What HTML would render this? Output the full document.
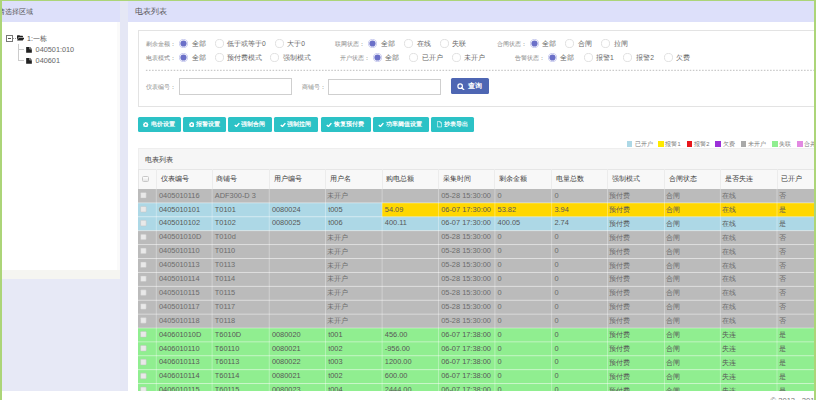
<!DOCTYPE html><html><head><meta charset="utf-8"><title>电表列表</title><style>
*{box-sizing:border-box;margin:0;padding:0}
html,body{width:816px;height:400px;overflow:hidden;background:#fff;font-family:"Liberation Sans",sans-serif;color:#666}
.a{position:absolute}
.t{position:absolute;white-space:nowrap}
#bg{left:2px;top:1px;width:812px;height:390px;background:#e7e9f6}
#lhead{left:2px;top:1px;width:118px;height:21px;background:#dde0fa;overflow:hidden}
#strip{left:120px;top:1px;width:7.5px;height:390px;background:#e5e7f5}
#lbody{left:2px;top:22px;width:118px;height:257px;background:#fafafa}
#rhead{left:127.5px;top:1px;width:686.5px;height:21px;background:#dde0fa}
#rbody{left:127.5px;top:22px;width:686.5px;height:369px;background:#fff;overflow:hidden}
.rad{position:absolute;width:9px;height:9px;border-radius:50%;border:1px solid #dcdcdc;background:#fff}
.rad.on{border-color:#c3c5ee}
.rad.on{background:radial-gradient(circle at 50% 50%,#6b70c8 0,#6b70c8 2.9px,#fff 3.3px)}
.lab{font-size:6px;line-height:8px;color:#888}
.opt{font-size:6.7px;line-height:8px;color:#666}
.btn{position:absolute;top:117.1px;height:14.7px;background:#2cc2c6;border-radius:1.5px;color:#fff;font-size:6px;line-height:14.7px;white-space:nowrap;font-weight:bold}
.lg{position:absolute;top:140.9px;width:5.6px;height:5.8px}
.lgt{font-size:5.7px;line-height:8px;color:#777}
</style></head><body>
<div class="a" id="bg"></div>
<div class="a" id="lhead"><span class="t" style="left:-4.3px;top:7px;font-size:6.7px;line-height:8px;color:#555">请选择区域</span></div>
<div class="a" id="strip"></div>
<div class="a" id="lbody"><div class="a" style="left:0;top:0;width:115px;height:248px;background:#fff"></div><div class="a" style="left:0;top:248px;width:118px;height:9px;background:#f5f5f1"></div></div>
<div class="a" style="left:6px;top:35px;width:6.8px;height:6.7px;border:1px solid #777;background:#fff"></div>
<div class="a" style="left:7.8px;top:38px;width:3.2px;height:0.8px;background:#555"></div>
<div class="a" style="left:13.2px;top:38px;width:0.8px;height:0.8px;background:#999"></div><div class="a" style="left:15px;top:38px;width:0.8px;height:0.8px;background:#999"></div>
<svg class="a" style="left:16.8px;top:35.4px" width="7.6" height="5.6" viewBox="0 0 14 10"><path d="M0 1.4 Q0 0.3 1 0.3 H4.6 L5.6 1.4 H10 Q11 1.4 11 2.4 V3.9 H3 L0 9 Z" fill="#222"/><path d="M3.3 4.7 H13.8 L10.6 9.8 H0.1 Z" fill="#222"/></svg>
<span class="t" style="left:27px;top:34.5px;font-size:7px;line-height:8px;color:#555">1:一栋</span>
<div class="a" style="left:18px;top:43.5px;width:0;height:17px;border-left:1px solid #ccc"></div>
<div class="a" style="left:18px;top:48.6px;width:5.6px;height:0;border-top:1px solid #ccc"></div>
<div class="a" style="left:18px;top:60px;width:5.6px;height:0;border-top:1px solid #ccc"></div>
<svg class="a" style="left:26.3px;top:46.9px" width="6" height="5.7" viewBox="0 0 10 10"><path d="M0 0 L6 0 L6 4 L10 4 L10 10 L0 10 Z M7 0 L10 3 L7 3 Z" fill="#222"/></svg>
<svg class="a" style="left:26.3px;top:58.1px" width="6" height="5.7" viewBox="0 0 10 10"><path d="M0 0 L6 0 L6 4 L10 4 L10 10 L0 10 Z M7 0 L10 3 L7 3 Z" fill="#222"/></svg>
<span class="t" style="left:35.6px;top:46px;font-size:7.3px;line-height:8px;color:#666">040501:010</span>
<span class="t" style="left:35.6px;top:57px;font-size:7.3px;line-height:8px;color:#666">040601</span>
<div class="a" id="rhead"><span class="t" style="left:7.5px;top:6px;font-size:7.8px;line-height:9px;color:#555">电表列表</span></div>
<div class="a" id="rbody"></div>
<div class="a" style="left:137.5px;top:30px;width:700px;height:76.6px;border:1px solid #e3e3e3;background:#fff"></div>
<span class="t lab" style="left:145.5px;top:39.5px">剩余金额：</span>
<svg class="a" style="left:178.75px;top:39.00px" width="9" height="9" viewBox="0 0 9 9"><circle cx="4.5" cy="4.5" r="4.05" fill="#fff" stroke="#c4c6ee" stroke-width="0.9"/><circle cx="4.5" cy="4.5" r="3.1" fill="#6b70c8"/></svg>
<span class="t opt" style="left:191.6px;top:39.5px">全部</span>
<svg class="a" style="left:214.50px;top:39.00px" width="9" height="9" viewBox="0 0 9 9"><circle cx="4.5" cy="4.5" r="4.05" fill="#fff" stroke="#dedede" stroke-width="0.9"/></svg>
<span class="t opt" style="left:227.1px;top:39.5px">低于或等于0</span>
<svg class="a" style="left:275.00px;top:39.00px" width="9" height="9" viewBox="0 0 9 9"><circle cx="4.5" cy="4.5" r="4.05" fill="#fff" stroke="#dedede" stroke-width="0.9"/></svg>
<span class="t opt" style="left:287.2px;top:39.5px">大于0</span>
<span class="t lab" style="left:334.7px;top:39.5px">联网状态：</span>
<svg class="a" style="left:368.00px;top:39.00px" width="9" height="9" viewBox="0 0 9 9"><circle cx="4.5" cy="4.5" r="4.05" fill="#fff" stroke="#c4c6ee" stroke-width="0.9"/><circle cx="4.5" cy="4.5" r="3.1" fill="#6b70c8"/></svg>
<span class="t opt" style="left:380.7px;top:39.5px">全部</span>
<svg class="a" style="left:404.00px;top:39.00px" width="9" height="9" viewBox="0 0 9 9"><circle cx="4.5" cy="4.5" r="4.05" fill="#fff" stroke="#dedede" stroke-width="0.9"/></svg>
<span class="t opt" style="left:416.7px;top:39.5px">在线</span>
<svg class="a" style="left:439.80px;top:39.00px" width="9" height="9" viewBox="0 0 9 9"><circle cx="4.5" cy="4.5" r="4.05" fill="#fff" stroke="#dedede" stroke-width="0.9"/></svg>
<span class="t opt" style="left:451.7px;top:39.5px">失联</span>
<span class="t lab" style="left:496.6px;top:39.5px">合闸状态：</span>
<svg class="a" style="left:529.50px;top:39.00px" width="9" height="9" viewBox="0 0 9 9"><circle cx="4.5" cy="4.5" r="4.05" fill="#fff" stroke="#c4c6ee" stroke-width="0.9"/><circle cx="4.5" cy="4.5" r="3.1" fill="#6b70c8"/></svg>
<span class="t opt" style="left:541.7px;top:39.5px">全部</span>
<svg class="a" style="left:565.00px;top:39.00px" width="9" height="9" viewBox="0 0 9 9"><circle cx="4.5" cy="4.5" r="4.05" fill="#fff" stroke="#dedede" stroke-width="0.9"/></svg>
<span class="t opt" style="left:577.7px;top:39.5px">合闸</span>
<svg class="a" style="left:601.00px;top:39.00px" width="9" height="9" viewBox="0 0 9 9"><circle cx="4.5" cy="4.5" r="4.05" fill="#fff" stroke="#dedede" stroke-width="0.9"/></svg>
<span class="t opt" style="left:613.5px;top:39.5px">拉闸</span>
<span class="t lab" style="left:145.5px;top:53.8px">电表模式：</span>
<svg class="a" style="left:178.75px;top:53.30px" width="9" height="9" viewBox="0 0 9 9"><circle cx="4.5" cy="4.5" r="4.05" fill="#fff" stroke="#c4c6ee" stroke-width="0.9"/><circle cx="4.5" cy="4.5" r="3.1" fill="#6b70c8"/></svg>
<span class="t opt" style="left:191.6px;top:53.8px">全部</span>
<svg class="a" style="left:214.60px;top:53.30px" width="9" height="9" viewBox="0 0 9 9"><circle cx="4.5" cy="4.5" r="4.05" fill="#fff" stroke="#dedede" stroke-width="0.9"/></svg>
<span class="t opt" style="left:227.1px;top:53.8px">预付费模式</span>
<svg class="a" style="left:270.30px;top:53.30px" width="9" height="9" viewBox="0 0 9 9"><circle cx="4.5" cy="4.5" r="4.05" fill="#fff" stroke="#dedede" stroke-width="0.9"/></svg>
<span class="t opt" style="left:283.4px;top:53.8px">强制模式</span>
<span class="t lab" style="left:340.0px;top:53.8px">开户状态：</span>
<svg class="a" style="left:373.20px;top:53.30px" width="9" height="9" viewBox="0 0 9 9"><circle cx="4.5" cy="4.5" r="4.05" fill="#fff" stroke="#c4c6ee" stroke-width="0.9"/><circle cx="4.5" cy="4.5" r="3.1" fill="#6b70c8"/></svg>
<span class="t opt" style="left:385.4px;top:53.8px">全部</span>
<svg class="a" style="left:409.20px;top:53.30px" width="9" height="9" viewBox="0 0 9 9"><circle cx="4.5" cy="4.5" r="4.05" fill="#fff" stroke="#dedede" stroke-width="0.9"/></svg>
<span class="t opt" style="left:421.5px;top:53.8px">已开户</span>
<svg class="a" style="left:452.00px;top:53.30px" width="9" height="9" viewBox="0 0 9 9"><circle cx="4.5" cy="4.5" r="4.05" fill="#fff" stroke="#dedede" stroke-width="0.9"/></svg>
<span class="t opt" style="left:464.0px;top:53.8px">未开户</span>
<span class="t lab" style="left:514.9px;top:53.8px">告警状态：</span>
<svg class="a" style="left:547.50px;top:53.30px" width="9" height="9" viewBox="0 0 9 9"><circle cx="4.5" cy="4.5" r="4.05" fill="#fff" stroke="#c4c6ee" stroke-width="0.9"/><circle cx="4.5" cy="4.5" r="3.1" fill="#6b70c8"/></svg>
<span class="t opt" style="left:560.0px;top:53.8px">全部</span>
<svg class="a" style="left:583.80px;top:53.30px" width="9" height="9" viewBox="0 0 9 9"><circle cx="4.5" cy="4.5" r="4.05" fill="#fff" stroke="#dedede" stroke-width="0.9"/></svg>
<span class="t opt" style="left:596.0px;top:53.8px">报警1</span>
<svg class="a" style="left:623.20px;top:53.30px" width="9" height="9" viewBox="0 0 9 9"><circle cx="4.5" cy="4.5" r="4.05" fill="#fff" stroke="#dedede" stroke-width="0.9"/></svg>
<span class="t opt" style="left:636.3px;top:53.8px">报警2</span>
<svg class="a" style="left:663.70px;top:53.30px" width="9" height="9" viewBox="0 0 9 9"><circle cx="4.5" cy="4.5" r="4.05" fill="#fff" stroke="#dedede" stroke-width="0.9"/></svg>
<span class="t opt" style="left:676.1px;top:53.8px">欠费</span>
<svg class="a" style="left:145px;top:69px" width="669" height="3" viewBox="0 0 669 3"><line x1="0.9" y1="1.3" x2="669" y2="1.3" stroke="#bdbdbd" stroke-width="1" stroke-dasharray="1.55 1.54"/></svg>
<span class="t lab" style="left:145.8px;top:82.8px">仪表编号：</span>
<div class="a" style="left:178.5px;top:78.3px;width:113.5px;height:17px;border:1px solid #cfcfcf;background:#fff"></div>
<span class="t lab" style="left:301.5px;top:82.8px">商铺号：</span>
<div class="a" style="left:328px;top:78.5px;width:113px;height:16.8px;border:1px solid #cfcfcf;background:#fff"></div>
<div class="a" style="left:450.9px;top:78px;width:38px;height:15.7px;background:#4e66b3;border-radius:1.5px"></div>
<svg class="a" style="left:457px;top:82.9px" width="7.5" height="7.5" viewBox="0 0 10 10"><circle cx="4.2" cy="4.2" r="3" stroke="#fff" stroke-width="1.6" fill="none"/><path d="M6.3 6.3 L9 9" stroke="#fff" stroke-width="1.8" stroke-linecap="round"/></svg>
<span class="t" style="left:468px;top:82.4px;font-size:7px;line-height:8px;color:#fff;font-weight:bold">查询</span>
<div class="btn" style="left:137.8px;width:43.0px"><svg class="a" style="left:5.7px;top:4.8px" width="5.4" height="5.4" viewBox="0 0 10 10"><circle cx="5" cy="5" r="3.3" stroke="#fff" stroke-width="2.4" fill="none"/><path d="M5 0V10M0 5H10M1.5 1.5L8.5 8.5M8.5 1.5L1.5 8.5" stroke="#fff" stroke-width="1.6"/><circle cx="5" cy="5" r="1.6" fill="#2cc2c6"/></svg><span class="t" style="left:13.0px;top:0">电价设置</span></div>
<div class="btn" style="left:183.0px;width:42.7px"><svg class="a" style="left:5.7px;top:4.8px" width="5.4" height="5.4" viewBox="0 0 10 10"><circle cx="5" cy="5" r="3.3" stroke="#fff" stroke-width="2.4" fill="none"/><path d="M5 0V10M0 5H10M1.5 1.5L8.5 8.5M8.5 1.5L1.5 8.5" stroke="#fff" stroke-width="1.6"/><circle cx="5" cy="5" r="1.6" fill="#2cc2c6"/></svg><span class="t" style="left:13.0px;top:0">报警设置</span></div>
<div class="btn" style="left:228.2px;width:43.8px"><svg class="a" style="left:5.5px;top:4.6px" width="6" height="5.6" viewBox="0 0 10 10"><path d="M1 5.2 L4 8 L9.2 2" stroke="#fff" stroke-width="2.6" fill="none"/></svg><span class="t" style="left:13.0px;top:0">强制合闸</span></div>
<div class="btn" style="left:274.4px;width:43.4px"><svg class="a" style="left:5.5px;top:4.6px" width="6" height="5.6" viewBox="0 0 10 10"><path d="M1 5.2 L4 8 L9.2 2" stroke="#fff" stroke-width="2.6" fill="none"/></svg><span class="t" style="left:13.0px;top:0">强制拉闸</span></div>
<div class="btn" style="left:320.6px;width:50.0px"><svg class="a" style="left:5.5px;top:4.6px" width="6" height="5.6" viewBox="0 0 10 10"><path d="M1 5.2 L4 8 L9.2 2" stroke="#fff" stroke-width="2.6" fill="none"/></svg><span class="t" style="left:13.0px;top:0">恢复预付费</span></div>
<div class="btn" style="left:372.9px;width:56.1px"><svg class="a" style="left:5.5px;top:4.6px" width="6" height="5.6" viewBox="0 0 10 10"><path d="M1 5.2 L4 8 L9.2 2" stroke="#fff" stroke-width="2.6" fill="none"/></svg><span class="t" style="left:13.0px;top:0">功率阈值设置</span></div>
<div class="btn" style="left:431.2px;width:42.8px"><svg class="a" style="left:5.8px;top:4.3px" width="5" height="6.4" viewBox="0 0 8 10"><path d="M0.6 0.6 H5 L7.4 3 V9.4 H0.6 Z M5 0.6 V3 H7.4" stroke="#fff" stroke-width="1" fill="none"/></svg><span class="t" style="left:12.5px;top:0">抄表导出</span></div>
<div class="lg" style="left:626.7px;background:#add8e6"></div>
<span class="t lgt" style="left:634.5px;top:139.9px">已开户</span>
<div class="lg" style="left:658.0px;background:#ffea00"></div>
<span class="t lgt" style="left:665.4px;top:139.9px">报警1</span>
<div class="lg" style="left:686.8px;background:#e8161c"></div>
<span class="t lgt" style="left:694.3px;top:139.9px">报警2</span>
<div class="lg" style="left:715.2px;background:#9b30d8"></div>
<span class="t lgt" style="left:722.8px;top:139.9px">欠费</span>
<div class="lg" style="left:740.5px;background:#a9a9a9"></div>
<span class="t lgt" style="left:748.1px;top:139.9px">未开户</span>
<div class="lg" style="left:772.0px;background:#90ee90"></div>
<span class="t lgt" style="left:779.3px;top:139.9px">失联</span>
<div class="lg" style="left:797.0px;background:#e28ae2"></div>
<span class="t lgt" style="left:804.3px;top:139.9px">合并</span>
<div class="a" style="left:138px;top:148.4px;width:700px;height:20.6px;background:#f6f6f6;border:1px solid #eeeeee;border-bottom:none"></div>
<span class="t" style="left:144.8px;top:156px;font-size:6.6px;line-height:8px;color:#444">电表列表</span>
<div class="a" style="left:138px;top:169px;width:700px;height:19.75px;background:#f8f8f8;border:1px solid #e6e6e6;border-bottom:none"></div>
<div class="a" style="left:155.75px;top:169px;width:1px;height:19.75px;background:#ececec"></div>
<div class="a" style="left:211.60px;top:169px;width:1px;height:19.75px;background:#ececec"></div>
<div class="a" style="left:268.70px;top:169px;width:1px;height:19.75px;background:#ececec"></div>
<div class="a" style="left:325.00px;top:169px;width:1px;height:19.75px;background:#ececec"></div>
<div class="a" style="left:381.60px;top:169px;width:1px;height:19.75px;background:#ececec"></div>
<div class="a" style="left:438.00px;top:169px;width:1px;height:19.75px;background:#ececec"></div>
<div class="a" style="left:494.40px;top:169px;width:1px;height:19.75px;background:#ececec"></div>
<div class="a" style="left:551.20px;top:169px;width:1px;height:19.75px;background:#ececec"></div>
<div class="a" style="left:607.10px;top:169px;width:1px;height:19.75px;background:#ececec"></div>
<div class="a" style="left:663.90px;top:169px;width:1px;height:19.75px;background:#ececec"></div>
<div class="a" style="left:719.80px;top:169px;width:1px;height:19.75px;background:#ececec"></div>
<div class="a" style="left:776.50px;top:169px;width:1px;height:19.75px;background:#ececec"></div>
<div class="a" style="left:142px;top:175.9px;width:6.5px;height:6.3px;border:1px solid #c8c8c8;border-radius:1.5px;background:linear-gradient(#fff,#e6e6e6)"></div>
<span class="t" style="left:160.55px;top:175.3px;font-size:6.5px;line-height:8px;color:#3a3a3a">仪表编号</span>
<span class="t" style="left:216.40px;top:175.3px;font-size:6.5px;line-height:8px;color:#3a3a3a">商铺号</span>
<span class="t" style="left:273.50px;top:175.3px;font-size:6.5px;line-height:8px;color:#3a3a3a">用户编号</span>
<span class="t" style="left:329.80px;top:175.3px;font-size:6.5px;line-height:8px;color:#3a3a3a">用户名</span>
<span class="t" style="left:386.40px;top:175.3px;font-size:6.5px;line-height:8px;color:#3a3a3a">购电总额</span>
<span class="t" style="left:442.80px;top:175.3px;font-size:6.5px;line-height:8px;color:#3a3a3a">采集时间</span>
<span class="t" style="left:499.20px;top:175.3px;font-size:6.5px;line-height:8px;color:#3a3a3a">剩余金额</span>
<span class="t" style="left:556.00px;top:175.3px;font-size:6.5px;line-height:8px;color:#3a3a3a">电量总数</span>
<span class="t" style="left:611.90px;top:175.3px;font-size:6.5px;line-height:8px;color:#3a3a3a">强制模式</span>
<span class="t" style="left:668.70px;top:175.3px;font-size:6.5px;line-height:8px;color:#3a3a3a">合闸状态</span>
<span class="t" style="left:724.60px;top:175.3px;font-size:6.5px;line-height:8px;color:#3a3a3a">是否失连</span>
<span class="t" style="left:781.30px;top:175.3px;font-size:6.5px;line-height:8px;color:#3a3a3a">已开户</span>
<div class="a" style="left:138px;top:188.75px;width:676px;height:202.25px;overflow:hidden">
<svg class="a" style="left:0;top:0" width="676" height="210" viewBox="0 0 676 210"><rect x="0" y="0.00" width="676" height="13.90" fill="#bbbbbb"/><rect x="0" y="13.90" width="676" height="13.90" fill="#add8e6"/><rect x="244.10" y="13.90" width="500" height="13.90" fill="#ffd700"/><rect x="0" y="27.80" width="676" height="13.90" fill="#add8e6"/><rect x="0" y="41.70" width="676" height="13.90" fill="#bbbbbb"/><rect x="0" y="55.60" width="676" height="13.90" fill="#bbbbbb"/><rect x="0" y="69.50" width="676" height="13.90" fill="#bbbbbb"/><rect x="0" y="83.40" width="676" height="13.90" fill="#bbbbbb"/><rect x="0" y="97.30" width="676" height="13.90" fill="#bbbbbb"/><rect x="0" y="111.20" width="676" height="13.90" fill="#bbbbbb"/><rect x="0" y="125.10" width="676" height="13.90" fill="#bbbbbb"/><rect x="0" y="139.00" width="676" height="13.90" fill="#90ee90"/><rect x="0" y="152.90" width="676" height="13.90" fill="#90ee90"/><rect x="0" y="166.80" width="676" height="13.90" fill="#90ee90"/><rect x="0" y="180.70" width="676" height="13.90" fill="#90ee90"/><rect x="0" y="194.60" width="676" height="13.90" fill="#90ee90"/><rect x="0" y="13.45" width="676" height="0.9" fill="#fff" fill-opacity="0.42"/><rect x="0" y="27.35" width="676" height="0.9" fill="#fff" fill-opacity="0.42"/><rect x="0" y="41.25" width="676" height="0.9" fill="#fff" fill-opacity="0.42"/><rect x="0" y="55.15" width="676" height="0.9" fill="#fff" fill-opacity="0.42"/><rect x="0" y="69.05" width="676" height="0.9" fill="#fff" fill-opacity="0.42"/><rect x="0" y="82.95" width="676" height="0.9" fill="#fff" fill-opacity="0.42"/><rect x="0" y="96.85" width="676" height="0.9" fill="#fff" fill-opacity="0.42"/><rect x="0" y="110.75" width="676" height="0.9" fill="#fff" fill-opacity="0.42"/><rect x="0" y="124.65" width="676" height="0.9" fill="#fff" fill-opacity="0.42"/><rect x="0" y="138.55" width="676" height="0.9" fill="#fff" fill-opacity="0.42"/><rect x="0" y="152.45" width="676" height="0.9" fill="#fff" fill-opacity="0.42"/><rect x="0" y="166.35" width="676" height="0.9" fill="#fff" fill-opacity="0.42"/><rect x="0" y="180.25" width="676" height="0.9" fill="#fff" fill-opacity="0.42"/><rect x="0" y="194.15" width="676" height="0.9" fill="#fff" fill-opacity="0.42"/><rect x="0" y="208.05" width="676" height="0.9" fill="#fff" fill-opacity="0.42"/><rect x="17.85" y="0" width="0.8" height="210" fill="#fff" fill-opacity="0.4"/><rect x="73.70" y="0" width="0.8" height="210" fill="#fff" fill-opacity="0.4"/><rect x="130.80" y="0" width="0.8" height="210" fill="#fff" fill-opacity="0.4"/><rect x="187.10" y="0" width="0.8" height="210" fill="#fff" fill-opacity="0.4"/><rect x="243.70" y="0" width="0.8" height="210" fill="#fff" fill-opacity="0.4"/><rect x="300.10" y="0" width="0.8" height="210" fill="#fff" fill-opacity="0.4"/><rect x="356.50" y="0" width="0.8" height="210" fill="#fff" fill-opacity="0.4"/><rect x="413.30" y="0" width="0.8" height="210" fill="#fff" fill-opacity="0.4"/><rect x="469.20" y="0" width="0.8" height="210" fill="#fff" fill-opacity="0.4"/><rect x="526.00" y="0" width="0.8" height="210" fill="#fff" fill-opacity="0.4"/><rect x="581.90" y="0" width="0.8" height="210" fill="#fff" fill-opacity="0.4"/><rect x="638.60" y="0" width="0.8" height="210" fill="#fff" fill-opacity="0.4"/><rect x="2.6" y="3.50" width="5.6" height="5.6" rx="0.7" fill="#e9e9e9" stroke="#c2c2c2" stroke-width="0.5"/><rect x="2.6" y="17.40" width="5.6" height="5.6" rx="0.7" fill="#e9e9e9" stroke="#c2c2c2" stroke-width="0.5"/><rect x="2.6" y="31.30" width="5.6" height="5.6" rx="0.7" fill="#e9e9e9" stroke="#c2c2c2" stroke-width="0.5"/><rect x="2.6" y="45.20" width="5.6" height="5.6" rx="0.7" fill="#e9e9e9" stroke="#c2c2c2" stroke-width="0.5"/><rect x="2.6" y="59.10" width="5.6" height="5.6" rx="0.7" fill="#e9e9e9" stroke="#c2c2c2" stroke-width="0.5"/><rect x="2.6" y="73.00" width="5.6" height="5.6" rx="0.7" fill="#e9e9e9" stroke="#c2c2c2" stroke-width="0.5"/><rect x="2.6" y="86.90" width="5.6" height="5.6" rx="0.7" fill="#e9e9e9" stroke="#c2c2c2" stroke-width="0.5"/><rect x="2.6" y="100.80" width="5.6" height="5.6" rx="0.7" fill="#e9e9e9" stroke="#c2c2c2" stroke-width="0.5"/><rect x="2.6" y="114.70" width="5.6" height="5.6" rx="0.7" fill="#e9e9e9" stroke="#c2c2c2" stroke-width="0.5"/><rect x="2.6" y="128.60" width="5.6" height="5.6" rx="0.7" fill="#e9e9e9" stroke="#c2c2c2" stroke-width="0.5"/><rect x="2.6" y="142.50" width="5.6" height="5.6" rx="0.7" fill="#e9e9e9" stroke="#c2c2c2" stroke-width="0.5"/><rect x="2.6" y="156.40" width="5.6" height="5.6" rx="0.7" fill="#e9e9e9" stroke="#c2c2c2" stroke-width="0.5"/><rect x="2.6" y="170.30" width="5.6" height="5.6" rx="0.7" fill="#e9e9e9" stroke="#c2c2c2" stroke-width="0.5"/><rect x="2.6" y="184.20" width="5.6" height="5.6" rx="0.7" fill="#e9e9e9" stroke="#c2c2c2" stroke-width="0.5"/><rect x="2.6" y="198.10" width="5.6" height="5.6" rx="0.7" fill="#e9e9e9" stroke="#c2c2c2" stroke-width="0.5"/></svg>
<span class="t" style="left:20.95px;top:2.90px;font-size:7.4px;line-height:8px;color:#6c6c6c">0405010116</span>
<span class="t" style="left:76.80px;top:2.90px;font-size:7.4px;line-height:8px;color:#6c6c6c">ADF300-D 3</span>
<span class="t" style="left:189.10px;top:3.30px;font-size:6.6px;line-height:8px;color:#6c6c6c">未开户</span>
<span class="t" style="left:303.20px;top:2.90px;font-size:7.4px;line-height:8px;color:#6c6c6c">05-28 15:30:00</span>
<span class="t" style="left:359.60px;top:2.90px;font-size:7.4px;line-height:8px;color:#6c6c6c">0</span>
<span class="t" style="left:416.40px;top:2.90px;font-size:7.4px;line-height:8px;color:#6c6c6c">0</span>
<span class="t" style="left:471.20px;top:3.30px;font-size:6.6px;line-height:8px;color:#6c6c6c">预付费</span>
<span class="t" style="left:528.00px;top:3.30px;font-size:6.6px;line-height:8px;color:#6c6c6c">合闸</span>
<span class="t" style="left:583.90px;top:3.30px;font-size:6.6px;line-height:8px;color:#6c6c6c">在线</span>
<span class="t" style="left:640.60px;top:3.30px;font-size:6.6px;line-height:8px;color:#6c6c6c">否</span>
<span class="t" style="left:20.95px;top:16.80px;font-size:7.4px;line-height:8px;color:#585858">0405010101</span>
<span class="t" style="left:76.80px;top:16.80px;font-size:7.4px;line-height:8px;color:#585858">T0101</span>
<span class="t" style="left:133.90px;top:16.80px;font-size:7.4px;line-height:8px;color:#585858">0080024</span>
<span class="t" style="left:190.20px;top:16.80px;font-size:7.4px;line-height:8px;color:#585858">t005</span>
<span class="t" style="left:246.80px;top:16.80px;font-size:7.4px;line-height:8px;color:#585858">54.09</span>
<span class="t" style="left:303.20px;top:16.80px;font-size:7.4px;line-height:8px;color:#585858">06-07 17:30:00</span>
<span class="t" style="left:359.60px;top:16.80px;font-size:7.4px;line-height:8px;color:#585858">53.82</span>
<span class="t" style="left:416.40px;top:16.80px;font-size:7.4px;line-height:8px;color:#585858">3.94</span>
<span class="t" style="left:471.20px;top:17.20px;font-size:6.6px;line-height:8px;color:#585858">预付费</span>
<span class="t" style="left:528.00px;top:17.20px;font-size:6.6px;line-height:8px;color:#585858">合闸</span>
<span class="t" style="left:583.90px;top:17.20px;font-size:6.6px;line-height:8px;color:#585858">在线</span>
<span class="t" style="left:640.60px;top:17.20px;font-size:6.6px;line-height:8px;color:#585858">是</span>
<span class="t" style="left:20.95px;top:30.70px;font-size:7.4px;line-height:8px;color:#585858">0405010102</span>
<span class="t" style="left:76.80px;top:30.70px;font-size:7.4px;line-height:8px;color:#585858">T0102</span>
<span class="t" style="left:133.90px;top:30.70px;font-size:7.4px;line-height:8px;color:#585858">0080025</span>
<span class="t" style="left:190.20px;top:30.70px;font-size:7.4px;line-height:8px;color:#585858">t006</span>
<span class="t" style="left:246.80px;top:30.70px;font-size:7.4px;line-height:8px;color:#585858">400.11</span>
<span class="t" style="left:303.20px;top:30.70px;font-size:7.4px;line-height:8px;color:#585858">06-07 17:30:00</span>
<span class="t" style="left:359.60px;top:30.70px;font-size:7.4px;line-height:8px;color:#585858">400.05</span>
<span class="t" style="left:416.40px;top:30.70px;font-size:7.4px;line-height:8px;color:#585858">2.74</span>
<span class="t" style="left:471.20px;top:31.10px;font-size:6.6px;line-height:8px;color:#585858">预付费</span>
<span class="t" style="left:528.00px;top:31.10px;font-size:6.6px;line-height:8px;color:#585858">合闸</span>
<span class="t" style="left:583.90px;top:31.10px;font-size:6.6px;line-height:8px;color:#585858">在线</span>
<span class="t" style="left:640.60px;top:31.10px;font-size:6.6px;line-height:8px;color:#585858">是</span>
<span class="t" style="left:20.95px;top:44.60px;font-size:7.4px;line-height:8px;color:#6c6c6c">040501010D</span>
<span class="t" style="left:76.80px;top:44.60px;font-size:7.4px;line-height:8px;color:#6c6c6c">T010d</span>
<span class="t" style="left:189.10px;top:45.00px;font-size:6.6px;line-height:8px;color:#6c6c6c">未开户</span>
<span class="t" style="left:303.20px;top:44.60px;font-size:7.4px;line-height:8px;color:#6c6c6c">05-28 15:30:00</span>
<span class="t" style="left:359.60px;top:44.60px;font-size:7.4px;line-height:8px;color:#6c6c6c">0</span>
<span class="t" style="left:416.40px;top:44.60px;font-size:7.4px;line-height:8px;color:#6c6c6c">0</span>
<span class="t" style="left:471.20px;top:45.00px;font-size:6.6px;line-height:8px;color:#6c6c6c">预付费</span>
<span class="t" style="left:528.00px;top:45.00px;font-size:6.6px;line-height:8px;color:#6c6c6c">合闸</span>
<span class="t" style="left:583.90px;top:45.00px;font-size:6.6px;line-height:8px;color:#6c6c6c">在线</span>
<span class="t" style="left:640.60px;top:45.00px;font-size:6.6px;line-height:8px;color:#6c6c6c">否</span>
<span class="t" style="left:20.95px;top:58.50px;font-size:7.4px;line-height:8px;color:#6c6c6c">0405010110</span>
<span class="t" style="left:76.80px;top:58.50px;font-size:7.4px;line-height:8px;color:#6c6c6c">T0110</span>
<span class="t" style="left:189.10px;top:58.90px;font-size:6.6px;line-height:8px;color:#6c6c6c">未开户</span>
<span class="t" style="left:303.20px;top:58.50px;font-size:7.4px;line-height:8px;color:#6c6c6c">05-28 15:30:00</span>
<span class="t" style="left:359.60px;top:58.50px;font-size:7.4px;line-height:8px;color:#6c6c6c">0</span>
<span class="t" style="left:416.40px;top:58.50px;font-size:7.4px;line-height:8px;color:#6c6c6c">0</span>
<span class="t" style="left:471.20px;top:58.90px;font-size:6.6px;line-height:8px;color:#6c6c6c">预付费</span>
<span class="t" style="left:528.00px;top:58.90px;font-size:6.6px;line-height:8px;color:#6c6c6c">合闸</span>
<span class="t" style="left:583.90px;top:58.90px;font-size:6.6px;line-height:8px;color:#6c6c6c">在线</span>
<span class="t" style="left:640.60px;top:58.90px;font-size:6.6px;line-height:8px;color:#6c6c6c">否</span>
<span class="t" style="left:20.95px;top:72.40px;font-size:7.4px;line-height:8px;color:#6c6c6c">0405010113</span>
<span class="t" style="left:76.80px;top:72.40px;font-size:7.4px;line-height:8px;color:#6c6c6c">T0113</span>
<span class="t" style="left:189.10px;top:72.80px;font-size:6.6px;line-height:8px;color:#6c6c6c">未开户</span>
<span class="t" style="left:303.20px;top:72.40px;font-size:7.4px;line-height:8px;color:#6c6c6c">05-28 15:30:00</span>
<span class="t" style="left:359.60px;top:72.40px;font-size:7.4px;line-height:8px;color:#6c6c6c">0</span>
<span class="t" style="left:416.40px;top:72.40px;font-size:7.4px;line-height:8px;color:#6c6c6c">0</span>
<span class="t" style="left:471.20px;top:72.80px;font-size:6.6px;line-height:8px;color:#6c6c6c">预付费</span>
<span class="t" style="left:528.00px;top:72.80px;font-size:6.6px;line-height:8px;color:#6c6c6c">合闸</span>
<span class="t" style="left:583.90px;top:72.80px;font-size:6.6px;line-height:8px;color:#6c6c6c">在线</span>
<span class="t" style="left:640.60px;top:72.80px;font-size:6.6px;line-height:8px;color:#6c6c6c">否</span>
<span class="t" style="left:20.95px;top:86.30px;font-size:7.4px;line-height:8px;color:#6c6c6c">0405010114</span>
<span class="t" style="left:76.80px;top:86.30px;font-size:7.4px;line-height:8px;color:#6c6c6c">T0114</span>
<span class="t" style="left:189.10px;top:86.70px;font-size:6.6px;line-height:8px;color:#6c6c6c">未开户</span>
<span class="t" style="left:303.20px;top:86.30px;font-size:7.4px;line-height:8px;color:#6c6c6c">05-28 15:30:00</span>
<span class="t" style="left:359.60px;top:86.30px;font-size:7.4px;line-height:8px;color:#6c6c6c">0</span>
<span class="t" style="left:416.40px;top:86.30px;font-size:7.4px;line-height:8px;color:#6c6c6c">0</span>
<span class="t" style="left:471.20px;top:86.70px;font-size:6.6px;line-height:8px;color:#6c6c6c">预付费</span>
<span class="t" style="left:528.00px;top:86.70px;font-size:6.6px;line-height:8px;color:#6c6c6c">合闸</span>
<span class="t" style="left:583.90px;top:86.70px;font-size:6.6px;line-height:8px;color:#6c6c6c">在线</span>
<span class="t" style="left:640.60px;top:86.70px;font-size:6.6px;line-height:8px;color:#6c6c6c">否</span>
<span class="t" style="left:20.95px;top:100.20px;font-size:7.4px;line-height:8px;color:#6c6c6c">0405010115</span>
<span class="t" style="left:76.80px;top:100.20px;font-size:7.4px;line-height:8px;color:#6c6c6c">T0115</span>
<span class="t" style="left:189.10px;top:100.60px;font-size:6.6px;line-height:8px;color:#6c6c6c">未开户</span>
<span class="t" style="left:303.20px;top:100.20px;font-size:7.4px;line-height:8px;color:#6c6c6c">05-28 15:30:00</span>
<span class="t" style="left:359.60px;top:100.20px;font-size:7.4px;line-height:8px;color:#6c6c6c">0</span>
<span class="t" style="left:416.40px;top:100.20px;font-size:7.4px;line-height:8px;color:#6c6c6c">0</span>
<span class="t" style="left:471.20px;top:100.60px;font-size:6.6px;line-height:8px;color:#6c6c6c">预付费</span>
<span class="t" style="left:528.00px;top:100.60px;font-size:6.6px;line-height:8px;color:#6c6c6c">合闸</span>
<span class="t" style="left:583.90px;top:100.60px;font-size:6.6px;line-height:8px;color:#6c6c6c">在线</span>
<span class="t" style="left:640.60px;top:100.60px;font-size:6.6px;line-height:8px;color:#6c6c6c">否</span>
<span class="t" style="left:20.95px;top:114.10px;font-size:7.4px;line-height:8px;color:#6c6c6c">0405010117</span>
<span class="t" style="left:76.80px;top:114.10px;font-size:7.4px;line-height:8px;color:#6c6c6c">T0117</span>
<span class="t" style="left:189.10px;top:114.50px;font-size:6.6px;line-height:8px;color:#6c6c6c">未开户</span>
<span class="t" style="left:303.20px;top:114.10px;font-size:7.4px;line-height:8px;color:#6c6c6c">05-28 15:30:00</span>
<span class="t" style="left:359.60px;top:114.10px;font-size:7.4px;line-height:8px;color:#6c6c6c">0</span>
<span class="t" style="left:416.40px;top:114.10px;font-size:7.4px;line-height:8px;color:#6c6c6c">0</span>
<span class="t" style="left:471.20px;top:114.50px;font-size:6.6px;line-height:8px;color:#6c6c6c">预付费</span>
<span class="t" style="left:528.00px;top:114.50px;font-size:6.6px;line-height:8px;color:#6c6c6c">合闸</span>
<span class="t" style="left:583.90px;top:114.50px;font-size:6.6px;line-height:8px;color:#6c6c6c">在线</span>
<span class="t" style="left:640.60px;top:114.50px;font-size:6.6px;line-height:8px;color:#6c6c6c">否</span>
<span class="t" style="left:20.95px;top:128.00px;font-size:7.4px;line-height:8px;color:#6c6c6c">0405010118</span>
<span class="t" style="left:76.80px;top:128.00px;font-size:7.4px;line-height:8px;color:#6c6c6c">T0118</span>
<span class="t" style="left:189.10px;top:128.40px;font-size:6.6px;line-height:8px;color:#6c6c6c">未开户</span>
<span class="t" style="left:303.20px;top:128.00px;font-size:7.4px;line-height:8px;color:#6c6c6c">05-28 15:30:00</span>
<span class="t" style="left:359.60px;top:128.00px;font-size:7.4px;line-height:8px;color:#6c6c6c">0</span>
<span class="t" style="left:416.40px;top:128.00px;font-size:7.4px;line-height:8px;color:#6c6c6c">0</span>
<span class="t" style="left:471.20px;top:128.40px;font-size:6.6px;line-height:8px;color:#6c6c6c">预付费</span>
<span class="t" style="left:528.00px;top:128.40px;font-size:6.6px;line-height:8px;color:#6c6c6c">合闸</span>
<span class="t" style="left:583.90px;top:128.40px;font-size:6.6px;line-height:8px;color:#6c6c6c">在线</span>
<span class="t" style="left:640.60px;top:128.40px;font-size:6.6px;line-height:8px;color:#6c6c6c">否</span>
<span class="t" style="left:20.95px;top:141.90px;font-size:7.4px;line-height:8px;color:#585858">040601010D</span>
<span class="t" style="left:76.80px;top:141.90px;font-size:7.4px;line-height:8px;color:#585858">T6010D</span>
<span class="t" style="left:133.90px;top:141.90px;font-size:7.4px;line-height:8px;color:#585858">0080020</span>
<span class="t" style="left:190.20px;top:141.90px;font-size:7.4px;line-height:8px;color:#585858">t001</span>
<span class="t" style="left:246.80px;top:141.90px;font-size:7.4px;line-height:8px;color:#585858">456.00</span>
<span class="t" style="left:303.20px;top:141.90px;font-size:7.4px;line-height:8px;color:#585858">06-07 17:38:00</span>
<span class="t" style="left:359.60px;top:141.90px;font-size:7.4px;line-height:8px;color:#585858">0</span>
<span class="t" style="left:416.40px;top:141.90px;font-size:7.4px;line-height:8px;color:#585858">0</span>
<span class="t" style="left:471.20px;top:142.30px;font-size:6.6px;line-height:8px;color:#585858">预付费</span>
<span class="t" style="left:528.00px;top:142.30px;font-size:6.6px;line-height:8px;color:#585858">合闸</span>
<span class="t" style="left:583.90px;top:142.30px;font-size:6.6px;line-height:8px;color:#585858">失连</span>
<span class="t" style="left:640.60px;top:142.30px;font-size:6.6px;line-height:8px;color:#585858">是</span>
<span class="t" style="left:20.95px;top:155.80px;font-size:7.4px;line-height:8px;color:#585858">0406010110</span>
<span class="t" style="left:76.80px;top:155.80px;font-size:7.4px;line-height:8px;color:#585858">T60110</span>
<span class="t" style="left:133.90px;top:155.80px;font-size:7.4px;line-height:8px;color:#585858">0080021</span>
<span class="t" style="left:190.20px;top:155.80px;font-size:7.4px;line-height:8px;color:#585858">t002</span>
<span class="t" style="left:246.80px;top:155.80px;font-size:7.4px;line-height:8px;color:#585858">-956.00</span>
<span class="t" style="left:303.20px;top:155.80px;font-size:7.4px;line-height:8px;color:#585858">06-07 17:38:00</span>
<span class="t" style="left:359.60px;top:155.80px;font-size:7.4px;line-height:8px;color:#585858">0</span>
<span class="t" style="left:416.40px;top:155.80px;font-size:7.4px;line-height:8px;color:#585858">0</span>
<span class="t" style="left:471.20px;top:156.20px;font-size:6.6px;line-height:8px;color:#585858">预付费</span>
<span class="t" style="left:528.00px;top:156.20px;font-size:6.6px;line-height:8px;color:#585858">合闸</span>
<span class="t" style="left:583.90px;top:156.20px;font-size:6.6px;line-height:8px;color:#585858">失连</span>
<span class="t" style="left:640.60px;top:156.20px;font-size:6.6px;line-height:8px;color:#585858">是</span>
<span class="t" style="left:20.95px;top:169.70px;font-size:7.4px;line-height:8px;color:#585858">0406010113</span>
<span class="t" style="left:76.80px;top:169.70px;font-size:7.4px;line-height:8px;color:#585858">T60113</span>
<span class="t" style="left:133.90px;top:169.70px;font-size:7.4px;line-height:8px;color:#585858">0080022</span>
<span class="t" style="left:190.20px;top:169.70px;font-size:7.4px;line-height:8px;color:#585858">t003</span>
<span class="t" style="left:246.80px;top:169.70px;font-size:7.4px;line-height:8px;color:#585858">1200.00</span>
<span class="t" style="left:303.20px;top:169.70px;font-size:7.4px;line-height:8px;color:#585858">06-07 17:38:00</span>
<span class="t" style="left:359.60px;top:169.70px;font-size:7.4px;line-height:8px;color:#585858">0</span>
<span class="t" style="left:416.40px;top:169.70px;font-size:7.4px;line-height:8px;color:#585858">0</span>
<span class="t" style="left:471.20px;top:170.10px;font-size:6.6px;line-height:8px;color:#585858">预付费</span>
<span class="t" style="left:528.00px;top:170.10px;font-size:6.6px;line-height:8px;color:#585858">合闸</span>
<span class="t" style="left:583.90px;top:170.10px;font-size:6.6px;line-height:8px;color:#585858">失连</span>
<span class="t" style="left:640.60px;top:170.10px;font-size:6.6px;line-height:8px;color:#585858">是</span>
<span class="t" style="left:20.95px;top:183.60px;font-size:7.4px;line-height:8px;color:#585858">0406010114</span>
<span class="t" style="left:76.80px;top:183.60px;font-size:7.4px;line-height:8px;color:#585858">T60114</span>
<span class="t" style="left:133.90px;top:183.60px;font-size:7.4px;line-height:8px;color:#585858">0080021</span>
<span class="t" style="left:190.20px;top:183.60px;font-size:7.4px;line-height:8px;color:#585858">t002</span>
<span class="t" style="left:246.80px;top:183.60px;font-size:7.4px;line-height:8px;color:#585858">600.00</span>
<span class="t" style="left:303.20px;top:183.60px;font-size:7.4px;line-height:8px;color:#585858">06-07 17:38:00</span>
<span class="t" style="left:359.60px;top:183.60px;font-size:7.4px;line-height:8px;color:#585858">0</span>
<span class="t" style="left:416.40px;top:183.60px;font-size:7.4px;line-height:8px;color:#585858">0</span>
<span class="t" style="left:471.20px;top:184.00px;font-size:6.6px;line-height:8px;color:#585858">预付费</span>
<span class="t" style="left:528.00px;top:184.00px;font-size:6.6px;line-height:8px;color:#585858">合闸</span>
<span class="t" style="left:583.90px;top:184.00px;font-size:6.6px;line-height:8px;color:#585858">失连</span>
<span class="t" style="left:640.60px;top:184.00px;font-size:6.6px;line-height:8px;color:#585858">是</span>
<span class="t" style="left:20.95px;top:197.50px;font-size:7.4px;line-height:8px;color:#585858">0406010115</span>
<span class="t" style="left:76.80px;top:197.50px;font-size:7.4px;line-height:8px;color:#585858">T60115</span>
<span class="t" style="left:133.90px;top:197.50px;font-size:7.4px;line-height:8px;color:#585858">0080023</span>
<span class="t" style="left:190.20px;top:197.50px;font-size:7.4px;line-height:8px;color:#585858">t004</span>
<span class="t" style="left:246.80px;top:197.50px;font-size:7.4px;line-height:8px;color:#585858">2444.00</span>
<span class="t" style="left:303.20px;top:197.50px;font-size:7.4px;line-height:8px;color:#585858">06-07 17:38:00</span>
<span class="t" style="left:359.60px;top:197.50px;font-size:7.4px;line-height:8px;color:#585858">0</span>
<span class="t" style="left:416.40px;top:197.50px;font-size:7.4px;line-height:8px;color:#585858">0</span>
<span class="t" style="left:471.20px;top:197.90px;font-size:6.6px;line-height:8px;color:#585858">预付费</span>
<span class="t" style="left:528.00px;top:197.90px;font-size:6.6px;line-height:8px;color:#585858">合闸</span>
<span class="t" style="left:583.90px;top:197.90px;font-size:6.6px;line-height:8px;color:#585858">失连</span>
<span class="t" style="left:640.60px;top:197.90px;font-size:6.6px;line-height:8px;color:#585858">是</span>
</div>
<span class="t" style="left:770.5px;top:396.5px;font-size:7.6px;line-height:8px;color:#777">© 2013 - 2016</span>
<div class="a" style="left:0;top:0;width:816px;height:1px;background:#acd578"></div>
<div class="a" style="left:0;top:0;width:2px;height:400px;background:#acd578"></div>
<div class="a" style="left:814px;top:0;width:2px;height:400px;background:#acd578"></div>
</body></html>
